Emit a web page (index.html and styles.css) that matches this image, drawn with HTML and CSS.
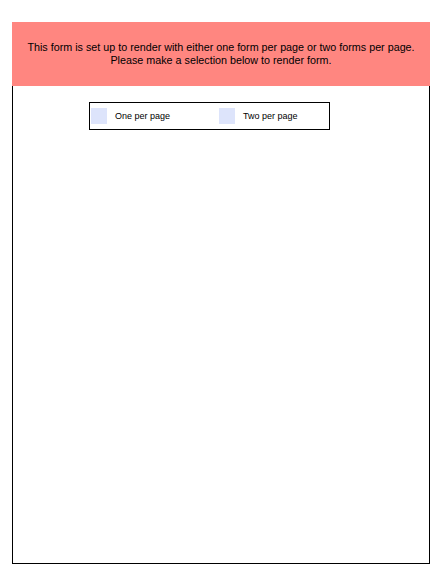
FILE: index.html
```html
<!DOCTYPE html>
<html>
<head>
<meta charset="utf-8">
<link rel="stylesheet" href="styles.css">
</head>
<body>
<div class="page">
  <div class="notice">
    <p>This form is set up to render with either one form per page or two forms per page.<br>Please make a selection below to render form.</p>
  </div>
  <div class="sheet">
    <div class="choices">
      <label class="choice"><span class="box"></span><span class="label">One per page</span></label>
      <label class="choice"><span class="box"></span><span class="label">Two per page</span></label>
    </div>
  </div>
</div>
</body>
</html>
```
FILE: styles.css
```css
html, body {
  margin: 0;
  padding: 0;
  background: #ffffff;
}
body {
  font-family: "Liberation Sans", Arial, sans-serif;
  color: #000;
}
.page {
  margin: 22px 0 0 12px;
  width: 418px;
}
.notice {
  background: #ff8680;
  height: 64px;
  display: flex;
  align-items: center;
  justify-content: center;
}
.notice p {
  margin: 0;
  font-size: 10.75px;
  line-height: 13px;
  text-align: center;
}
.sheet {
  height: 461px;
  border: 1px solid #000;
  border-top: none;
  padding-top: 16px;
  padding-left: 76px;
}
.choices {
  width: 238px;
  height: 26px;
  border: 1px solid #000;
  display: flex;
  align-items: center;
  padding-left: 1px;
}
.choice {
  display: flex;
  align-items: center;
  flex: none;
  width: 128px;
}
.choice + .choice {
  width: auto;
}
.box {
  width: 16px;
  height: 16px;
  background: #dde4fb;
  margin-right: 8px;
}
.label {
  font-size: 9px;
}
```
